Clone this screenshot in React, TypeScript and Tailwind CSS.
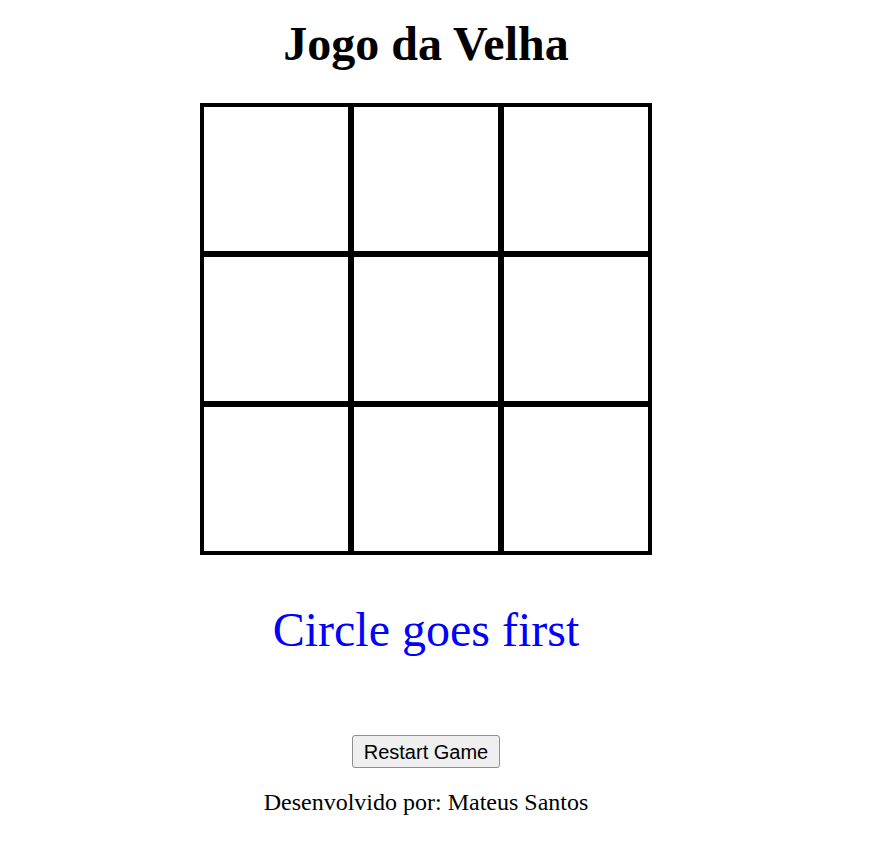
import React, { useState } from 'react';

type Mark = 'circle' | 'cross' | null;

export default function App() {
  const [cells, setCells] = useState<Mark[]>(Array(9).fill(null));
  const [turn, setTurn] = useState<'circle' | 'cross'>('circle');
  const [started, setStarted] = useState(false);

  const handleClick = (i: number) => {
    if (cells[i]) return;
    const next = [...cells];
    next[i] = turn;
    setCells(next);
    setTurn(turn === 'circle' ? 'cross' : 'circle');
    setStarted(true);
  };

  const restart = () => {
    setCells(Array(9).fill(null));
    setTurn('circle');
    setStarted(false);
  };

  const message = !started
    ? 'Circle goes first'
    : turn === 'circle'
    ? 'It is now circle\u2019s turn'
    : 'It is now cross\u2019s turn';

  return (
    <div className="min-h-[855px] bg-white">
      <div className="w-[852px] flex flex-col items-center font-['Liberation_Serif','Times_New_Roman',serif] text-black">
        {/* Title */}
        <h1 className="mt-[17px] text-[48px] leading-[53px] font-bold">Jogo da Velha</h1>

        {/* Board */}
        <div className="mt-[33px] grid grid-cols-3 border border-black">
          {cells.map((c, i) => (
            <div
              key={i}
              onClick={() => handleClick(i)}
              className="w-[150px] h-[150px] border-[3px] border-black flex items-center justify-center cursor-pointer"
            >
              {c === 'circle' && <div className="w-[90px] h-[90px] rounded-full border-[10px] border-blue-600" />}
              {c === 'cross' && <span className="text-[110px] leading-none text-red-600">×</span>}
            </div>
          ))}
        </div>

        {/* Status */}
        <p className="mt-[48px] text-[48px] leading-[53px] text-[#0000ff]">{message}</p>

        {/* Restart */}
        <button
          onClick={restart}
          className="mt-[79px] w-[148px] h-[33px] bg-[#efefef] border border-[#8f8f8f] rounded-[3px] text-[20px] leading-none text-black font-['Liberation_Sans',Arial,sans-serif] hover:bg-[#e5e5e5]"
        >
          Restart Game
        </button>

        {/* Footer */}
        <p className="mt-[21px] text-[24px] leading-[27px]">Desenvolvido por: Mateus Santos</p>
      </div>
    </div>
  );
}
